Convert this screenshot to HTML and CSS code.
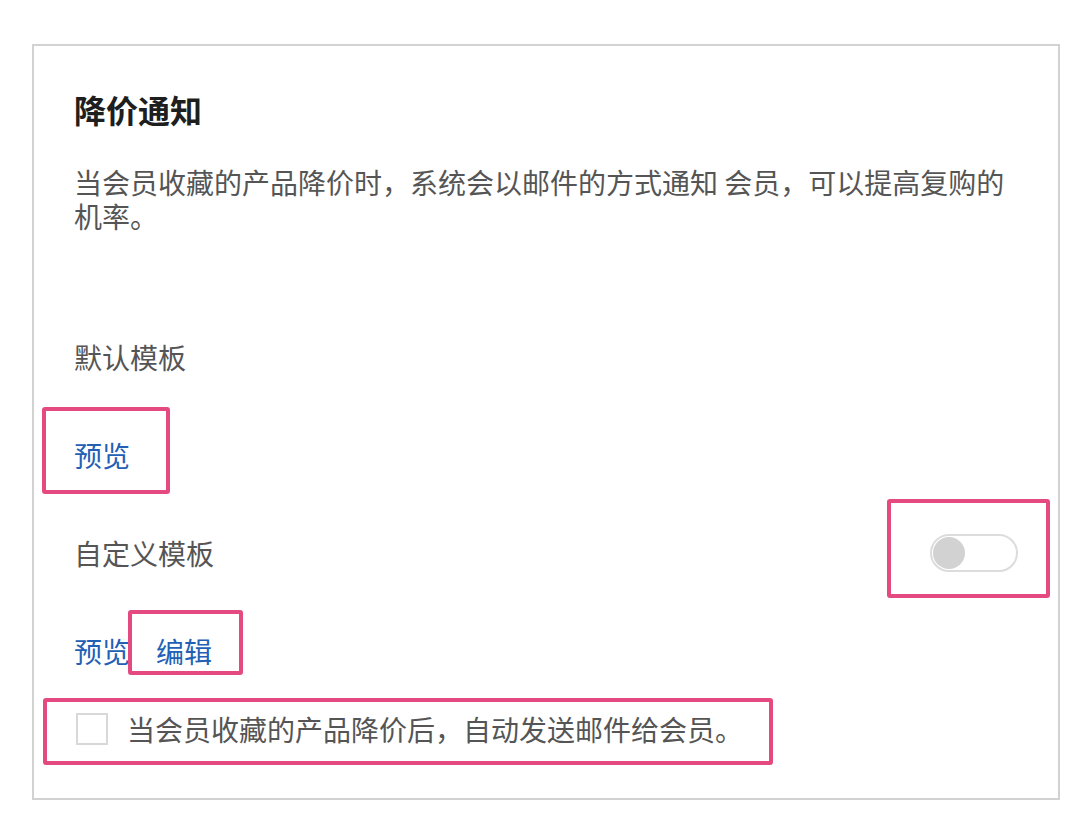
FILE: index.html
```html
<!DOCTYPE html>
<html lang="zh-CN">
<head>
    <meta charset="UTF-8">
    <meta name="viewport" content="width=device-width, initial-scale=1.0">
    <title>降价通知</title>
    <link rel="stylesheet" href="styles.css">
</head>
<body>
    <div class="card">
        <h2 class="card-title">降价通知</h2>
        <p class="card-desc">当会员收藏的产品降价时，系统会以邮件的方式通知 会员，可以提高复购的机率。</p>

        <div class="row row-first">
            <span class="label">默认模板</span>
        </div>
        <div class="row">
            <a class="link" href="#">预览</a>
        </div>
        <div class="row row-between">
            <span class="label">自定义模板</span>
            <label class="toggle">
                <input type="checkbox">
                <span class="toggle-track"><span class="toggle-knob"></span></span>
            </label>
        </div>
        <div class="row">
            <a class="link" href="#">预览</a>
            <a class="link link-edit" href="#">编辑</a>
        </div>
        <label class="row row-check">
            <input type="checkbox" class="check-input">
            <span class="check-box"></span>
            <span class="label">当会员收藏的产品降价后，自动发送邮件给会员。</span>
        </label>

        <!-- annotation boxes -->
        <div class="mark mark-preview"></div>
        <div class="mark mark-toggle"></div>
        <div class="mark mark-edit"></div>
        <div class="mark mark-check"></div>
    </div>
</body>
</html>
```

FILE: styles.css
```css
body { margin: 0; background: #fff; font-family: "Noto Sans CJK SC", "Noto Sans", sans-serif; color: #555; }
.card { position: relative; box-sizing: border-box; margin: 44px 0 0 32px; width: 1028px; padding: 43px 40px 49px 40px; border: 2px solid #d2d2d2; background: #fff; }
.card-title { margin: 0; font-size: 32px; line-height: 40px; font-weight: 700; color: #1e1e1e; }
.card-desc { max-width: 945px; margin: 36px 0 0; font-size: 28px; line-height: 34px; color: #555; }
.row { display: flex; align-items: center; height: 40px; margin-top: 58px; font-size: 28px; }
.row-first { margin-top: 104px; }
.row-between { justify-content: space-between; }
.row-check { margin-top: 38px; cursor: pointer; }
.label { color: #555; }
.link { color: #2360b5; text-decoration: none; }
.link-edit { margin-left: 26px; }
.toggle { display: block; cursor: pointer; }
.toggle input, .check-input { display: none; }
.toggle-track { display: block; position: relative; width: 84px; height: 34px; border: 2px solid #dcdcdc; border-radius: 19px; background: #fff; }
.toggle-knob { position: absolute; left: 1px; top: 1px; width: 32px; height: 32px; border-radius: 50%; background: #d2d2d2; }
.check-box { width: 28px; height: 28px; border: 2px solid #d8d8d8; background: #fff; margin-right: 19px; margin-left: 2px; flex-shrink: 0; }
.mark { position: absolute; border: 4px solid #e44a80; border-radius: 3px; pointer-events: none; }
.mark-preview { left: 8px; top: 361px; width: 120px; height: 79px; }
.mark-toggle { left: 853px; top: 453px; width: 155px; height: 91px; }
.mark-edit { left: 94px; top: 564px; width: 107px; height: 57px; }
.mark-check { left: 9px; top: 652px; width: 722px; height: 59px; }
```
